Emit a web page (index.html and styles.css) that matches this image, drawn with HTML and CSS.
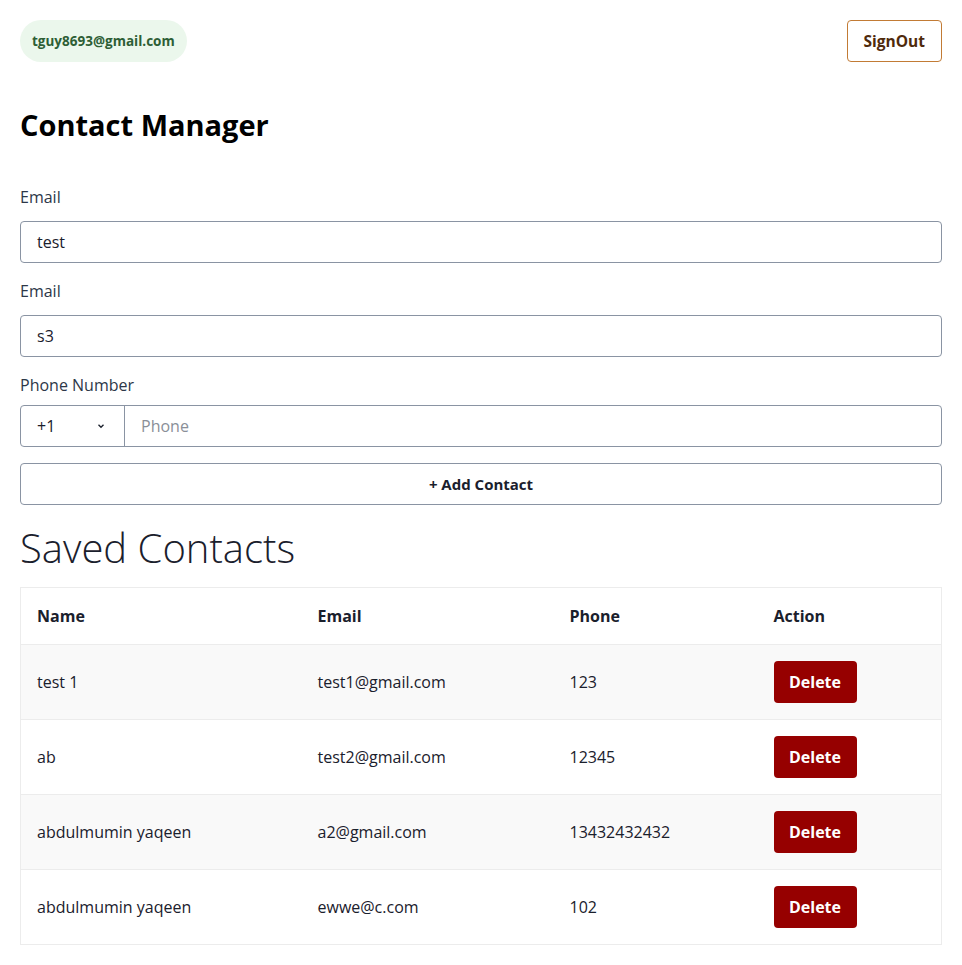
FILE: index.html
```
<!DOCTYPE html>
<html>
<head>
<meta charset="utf-8">
<link rel="stylesheet" href="styles.css">
</head>
<body>
<div class="page">
  <header class="topbar">
    <span class="badge">tguy8693@gmail.com</span>
    <button class="signout">SignOut</button>
  </header>
  <h1 class="title">Contact Manager</h1>
  <form class="form">
    <label class="label first">Email</label>
    <div class="input">test</div>
    <label class="label">Email</label>
    <div class="input">s3</div>
    <label class="label phone-label">Phone Number</label>
    <div class="phone-group">
      <div class="country">
        <span>+1</span>
        <svg class="chev" width="10" height="10" viewBox="0 0 10 10"><path d="M2.5 3.8 L5 6.3 L7.5 3.8" fill="none" stroke="#1a202c" stroke-width="1.3"/></svg>
      </div>
      <div class="phone-input">Phone</div>
    </div>
    <div class="add-btn">+ Add Contact</div>
  </form>
  <h2 class="subtitle">Saved Contacts</h2>
  <table class="table">
    <thead>
      <tr><th class="c-name">Name</th><th class="c-email">Email</th><th class="c-phone">Phone</th><th class="c-action">Action</th></tr>
    </thead>
    <tbody>
      <tr><td>test 1</td><td>test1@gmail.com</td><td>123</td><td><span class="del">Delete</span></td></tr>
      <tr><td>ab</td><td>test2@gmail.com</td><td>12345</td><td><span class="del">Delete</span></td></tr>
      <tr><td>abdulmumin yaqeen</td><td>a2@gmail.com</td><td>13432432432</td><td><span class="del">Delete</span></td></tr>
      <tr><td>abdulmumin yaqeen</td><td>ewwe@c.com</td><td>102</td><td><span class="del">Delete</span></td></tr>
    </tbody>
  </table>
</div>
</body>
</html>
```
FILE: styles.css
```
* { box-sizing: border-box; }
html, body { margin: 0; padding: 0; background: #fff; }
body {
  font-family: "Open Sans", "Noto Sans", sans-serif;
  color: #1a202c;
  font-size: 16px;
}
.page { padding: 20px; }
.topbar {
  display: flex;
  justify-content: space-between;
  align-items: center;
  height: 42px;
}
.badge {
  display: inline-flex;
  align-items: center;
  height: 42px;
  padding: 0 12px;
  border-radius: 21px;
  background: #ebf7ec;
  color: #2d5e35;
  font-weight: 700;
  font-size: 13.5px;
}
.signout {
  height: 42px;
  padding: 0 16px;
  border: 1px solid #c27b35;
  border-radius: 4px;
  background: #fff;
  color: #4f2a0c;
  font-family: inherit;
  font-weight: 700;
  font-size: 15.5px;
}
.title {
  margin: 45px 0 0;
  font-size: 29px;
  line-height: 36px;
  font-weight: 700;
  color: #000;
}
.form { display: flex; flex-direction: column; }
.label {
  display: block;
  line-height: 24px;
  margin: 16px 0 12px;
  color: #2d3748;
  font-size: 16px;
}
.label.first { margin-top: 42px; }
.label.phone-label { margin-bottom: 8px; }
.input {
  height: 42px;
  border: 1px solid #8a94a3;
  border-radius: 4px;
  padding: 0 16px;
  display: flex;
  align-items: center;
  font-size: 16px;
}
.phone-group {
  display: flex;
  height: 42px;
  border: 1px solid #8a94a3;
  border-radius: 4px;
}
.country {
  width: 104px;
  flex: none;
  display: flex;
  align-items: center;
  justify-content: space-between;
  padding: 0 18px 0 16px;
  border-right: 1px solid #8a94a3;
}
.chev { display: block; }
.phone-input {
  flex: 1;
  display: flex;
  align-items: center;
  padding: 0 16px;
  color: #8a8f98;
}
.add-btn {
  margin-top: 16px;
  height: 42px;
  border: 1px solid #8a94a3;
  border-radius: 4px;
  display: flex;
  align-items: center;
  justify-content: center;
  font-weight: 700;
  font-size: 15px;
}
.subtitle {
  margin: 19px 0 15px;
  font-size: 40px;
  line-height: 48px;
  font-weight: 300;
  color: #1a202c;
}
.table {
  width: 100%;
  table-layout: fixed;
  border-collapse: collapse;
  border: 1px solid #ececec;
}
.table th, .table td {
  text-align: left;
  padding: 0 16px;
  border-top: 1px solid #ececec;
}
.table th {
  height: 57px;
  font-weight: 700;
  font-size: 16px;
}
.table td { height: 75px; font-size: 16px; }
.table tbody tr:nth-child(odd) { background: #f9f9f9; }
.c-name { width: 281px; }
.c-email { width: 252px; }
.c-phone { width: 204px; }
.del {
  display: inline-flex;
  align-items: center;
  justify-content: center;
  width: 83px;
  height: 42px;
  border-radius: 4px;
  background: #960000;
  color: #fff;
  font-weight: 700;
}
```
